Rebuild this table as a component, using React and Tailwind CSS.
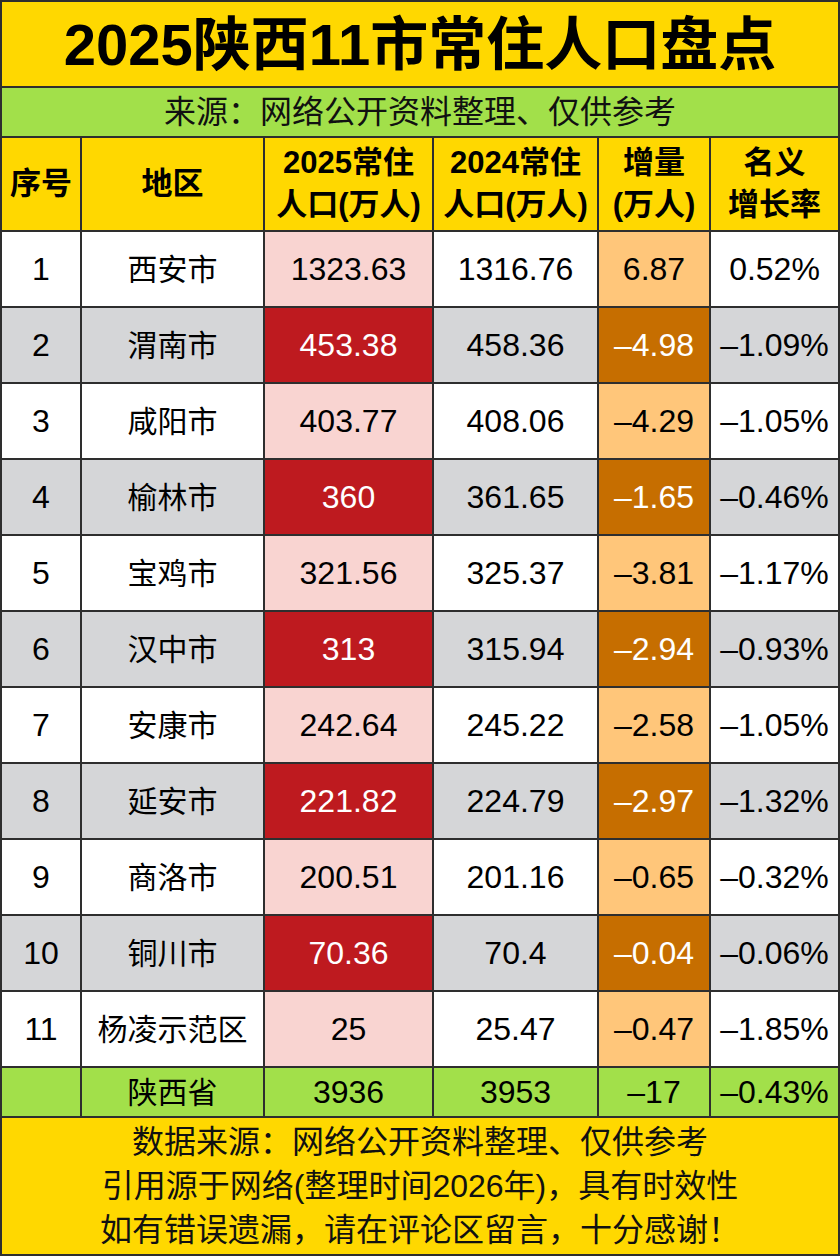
import React from "react";

const rows = [
  ["1", "西安市", "1323.63", "1316.76", "6.87", "0.52%"],
  ["2", "渭南市", "453.38", "458.36", "–4.98", "–1.09%"],
  ["3", "咸阳市", "403.77", "408.06", "–4.29", "–1.05%"],
  ["4", "榆林市", "360", "361.65", "–1.65", "–0.46%"],
  ["5", "宝鸡市", "321.56", "325.37", "–3.81", "–1.17%"],
  ["6", "汉中市", "313", "315.94", "–2.94", "–0.93%"],
  ["7", "安康市", "242.64", "245.22", "–2.58", "–1.05%"],
  ["8", "延安市", "221.82", "224.79", "–2.97", "–1.32%"],
  ["9", "商洛市", "200.51", "201.16", "–0.65", "–0.32%"],
  ["10", "铜川市", "70.36", "70.4", "–0.04", "–0.06%"],
  ["11", "杨凌示范区", "25", "25.47", "–0.47", "–1.85%"],
];

const font = { fontFamily: '"Liberation Sans", "Noto Sans CJK SC", sans-serif' };

export default function App() {
  return (
    <div
      className="w-[840px] h-[1256px] bg-[#2e2e2e] grid grid-cols-[78px_181px_167px_163px_110px_127px] grid-rows-[84px_48px_92px_repeat(11,74px)_48px_136px] gap-[2px] p-[2px] text-black"
      style={font}
    >
      <div className="col-span-6 bg-[#ffd800] flex items-center justify-center text-[58px] font-bold">
        2025陕西11市常住人口盘点
      </div>
      <div className="col-span-6 bg-[#a2e04a] flex items-center justify-center text-[32px] text-[#111]">
        来源：网络公开资料整理、仅供参考
      </div>
      {[
        ["序号"],
        ["地区"],
        ["2025常住", "人口(万人)"],
        ["2024常住", "人口(万人)"],
        ["增量", "(万人)"],
        ["名义", "增长率"],
      ].map((h, i) => (
        <div
          key={i}
          className="bg-[#ffd800] flex flex-col items-center justify-center text-[31px] font-bold leading-[42px] whitespace-nowrap"
        >
          {h.map((t, j) => (
            <span key={j}>{t}</span>
          ))}
        </div>
      ))}
      {rows.map((r, idx) => {
        const even = idx % 2 === 1;
        const base = even ? "bg-[#d5d6d8]" : "bg-white";
        const c3 = even ? "bg-[#be1a1f] text-white" : "bg-[#f9d4d1]";
        const c5 = even ? "bg-[#c66e00] text-white" : "bg-[#ffc67a]";
        const cls = [base, base, c3, base, c5, base];
        return r.map((v, i) => (
          <div
            key={idx + "-" + i}
            className={`${cls[i]} flex items-center justify-center ${i === 1 ? "text-[30px]" : "text-[32px]"} whitespace-nowrap`}
          >
            {v}
          </div>
        ));
      })}
      {["", "陕西省", "3936", "3953", "–17", "–0.43%"].map((v, i) => (
        <div
          key={"t" + i}
          className={`bg-[#a2e04a] flex items-center justify-center ${i === 1 ? "text-[30px]" : "text-[32px]"} whitespace-nowrap`}
        >
          {v}
        </div>
      ))}
      <div className="col-span-6 bg-[#ffd800] flex flex-col items-center justify-center text-[32px] leading-[44px] text-[#111]">
        <span>数据来源：网络公开资料整理、仅供参考</span>
        <span>引用源于网络(整理时间2026年)，具有时效性</span>
        <span>如有错误遗漏，请在评论区留言，十分感谢！</span>
      </div>
    </div>
  );
}
